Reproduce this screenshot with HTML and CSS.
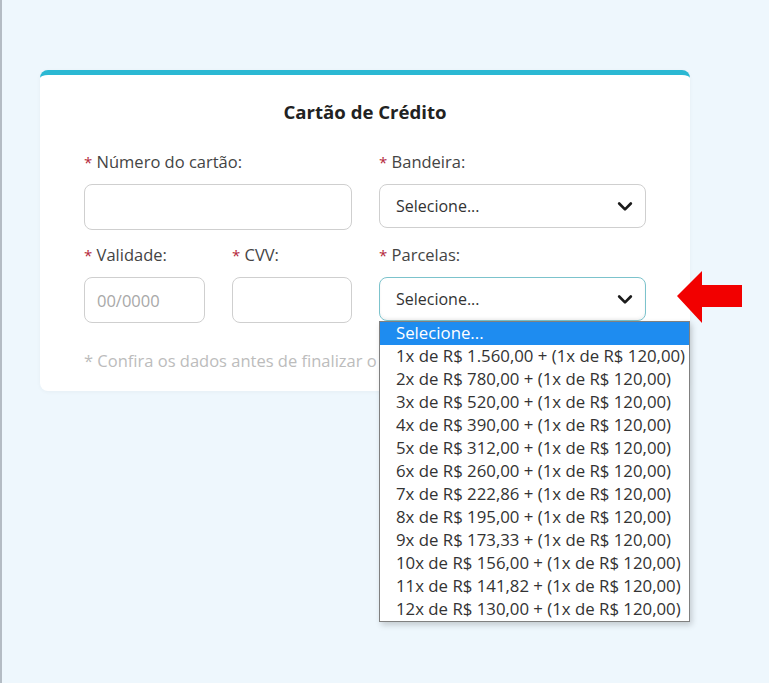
FILE: index.html
```html
<!DOCTYPE html>
<html lang="pt-BR">
<head>
	<meta charset="UTF-8">
	<title>Cartão de Crédito</title>
	<link rel="stylesheet" href="styles.css">
</head>
<body>
	<div class="page">
		<section class="card">
			<h2 class="card-title">Cartão de Crédito</h2>
			<div class="form-grid">
				<div class="field">
					<label><span class="req">*</span> Número do cartão:</label>
					<div class="input"></div>
				</div>
				<div class="field">
					<label><span class="req">*</span> Bandeira:</label>
					<div class="input select">
						<span>Selecione...</span>
						<svg class="chev" width="20" height="20" viewBox="0 0 24 24"><polyline points="5,9 12,16 19,9" fill="none" stroke="#1b1b1b" stroke-width="3.2" stroke-linecap="round" stroke-linejoin="round"/></svg>
					</div>
				</div>
				<div class="sub-grid">
					<div class="field">
						<label><span class="req">*</span> Validade:</label>
						<div class="input short placeholder">00/0000</div>
					</div>
					<div class="field">
						<label><span class="req">*</span> CVV:</label>
						<div class="input short"></div>
					</div>
				</div>
				<div class="field">
					<label><span class="req">*</span> Parcelas:</label>
					<div class="select-wrap">
						<div class="input select focus">
							<span>Selecione...</span>
							<svg class="chev" width="20" height="20" viewBox="0 0 24 24"><polyline points="5,9 12,16 19,9" fill="none" stroke="#1b1b1b" stroke-width="3.2" stroke-linecap="round" stroke-linejoin="round"/></svg>
						</div>
						<ul class="options">
							<li class="active">Selecione...</li>
							<li>1x de R$ 1.560,00 + (1x de R$ 120,00)</li>
							<li>2x de R$ 780,00 + (1x de R$ 120,00)</li>
							<li>3x de R$ 520,00 + (1x de R$ 120,00)</li>
							<li>4x de R$ 390,00 + (1x de R$ 120,00)</li>
							<li>5x de R$ 312,00 + (1x de R$ 120,00)</li>
							<li>6x de R$ 260,00 + (1x de R$ 120,00)</li>
							<li>7x de R$ 222,86 + (1x de R$ 120,00)</li>
							<li>8x de R$ 195,00 + (1x de R$ 120,00)</li>
							<li>9x de R$ 173,33 + (1x de R$ 120,00)</li>
							<li>10x de R$ 156,00 + (1x de R$ 120,00)</li>
							<li>11x de R$ 141,82 + (1x de R$ 120,00)</li>
							<li>12x de R$ 130,00 + (1x de R$ 120,00)</li>
						</ul>
						<svg class="pointer" width="66" height="54" viewBox="0 0 66 54"><polygon points="0,25 25,0 25,14 65,14 65,36 25,36 25,52" fill="#f20000"/></svg>
					</div>
				</div>
			</div>
			<p class="note">* Confira os dados antes de finalizar o pedido.</p>
		</section>
	</div>
</body>
</html>
```

FILE: styles.css
```css
*{padding: 0;margin: 0;}
*,*:after,*:before{box-sizing:border-box;}
html,body{height: 100%;width: 100%;}
body{
	background: #eef7fd;
	border-left: 2px solid #b4bcc4;
	font-family: "Open Sans", "Noto Sans", sans-serif;
	color: #333;
	overflow: hidden;
}
.page{padding: 70px 0 0 38px;}
.card{
	width: 650px;
	background: #fff;
	border-top: 5px solid #2bb8d3;
	border-radius: 8px;
	padding: 25px 44px 20px;
	box-shadow: 0 1px 4px rgba(0,0,0,0.04);
}
.card-title{
	text-align: center;
	font-size: 18.6px;
	font-weight: 700;
	color: #222;
	line-height: 24px;
	margin-bottom: 27px;
}
.form-grid{
	display: grid;
	grid-template-columns: 268px 267px;
	column-gap: 27px;
	row-gap: 14px;
}
.sub-grid{
	display: grid;
	grid-template-columns: 121px 120px;
	column-gap: 27px;
}
.field label{
	display: block;
	font-size: 16.5px;
	line-height: 21px;
	color: #444;
	margin-bottom: 11px;
}
.req{color: #b3263a;font-size: 15px;}
.input{
	height: 46px;
	border: 1px solid #cfcfcf;
	border-radius: 8px;
	background: #fff;
	font-size: 16px;
	display: flex;
	align-items: center;
	padding: 0 16px;
}
.placeholder{color: #a8a8a8;padding-left: 12px;font-size: 16.5px;}
.select{
	height: 44px;
	justify-content: space-between;
	color: #333;
}
.select .chev{margin-right: -6px;}
.select.focus{
	border-color: #7cc3cc;
	box-shadow: inset 0 -2px 3px rgba(0,0,0,0.05);
}
.select-wrap{position: relative;}
.options{
	position: absolute;
	top: 44px;
	left: 0;
	width: 311px;
	list-style: none;
	background: #fff;
	border: 1px solid #808080;
	box-shadow: 2px 3px 6px rgba(0,0,0,0.18);
	font-size: 16.8px;
	color: #333;
	z-index: 2;
}
.options li{
	height: 23px;
	line-height: 22px;
	padding-left: 16px;
	white-space: nowrap;
}
.options li.active{background: #1e8cf0;color: #fff;}
.pointer{
	position: absolute;
	left: 298px;
	top: -6px;
}
.note{
	margin-top: 27px;
	font-size: 16.5px;
	line-height: 21px;
	color: #bcbcbc;
	white-space: nowrap;
}
```
